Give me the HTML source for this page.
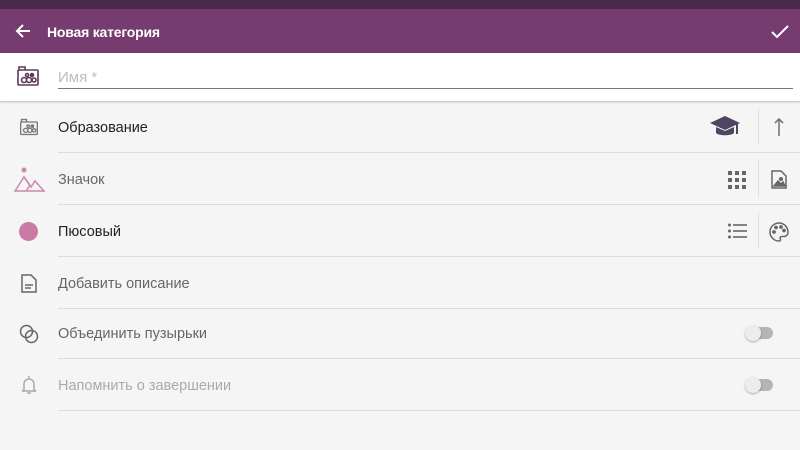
<!DOCTYPE html>
<html><head><meta charset="utf-8"><style>
*{margin:0;padding:0;box-sizing:border-box}
body{width:800px;height:450px;overflow:hidden;background:#f5f5f5;font-family:"Liberation Sans",sans-serif;position:relative}
.sb{position:absolute;left:0;top:0;width:800px;height:9px;background:#4b2a49}
.tb{position:absolute;left:0;top:9px;width:800px;height:44px;background:#763c6f;box-shadow:0 1px 3px rgba(0,0,0,.3)}
.tb .t{position:absolute;left:47px;top:15px;color:#fff;font-size:14px;font-weight:bold;letter-spacing:-0.2px}
.name{position:absolute;left:0;top:53px;width:800px;height:48px;background:#fff;box-shadow:0 1px 2px rgba(0,0,0,.25)}
.name .ph{position:absolute;left:58px;top:16px;font-size:15px;color:#bdbdbd}
.name .ln{position:absolute;left:58px;top:35px;width:735px;height:1px;background:#777}
.row{position:absolute;left:0;width:800px;height:52px}
.row .tx{position:absolute;left:58px;top:19px;font-size:14.5px;color:#666}
.row .dv{position:absolute;left:58px;right:0;bottom:0;height:1px;background:#ddd}
.vs{position:absolute;left:758px;top:8px;width:1px;height:36px;background:#ddd}
.ic{position:absolute}
.tg{position:absolute;left:745px;top:20px;width:28px;height:12px}
.tg .tr{position:absolute;left:8px;top:0;width:20px;height:12px;border-radius:6px;background:#b5b5b5}
.tg .th{position:absolute;left:0;top:-2px;width:16px;height:16px;border-radius:50%;background:#ececec;box-shadow:0 1px 2px rgba(0,0,0,.3)}
</style></head><body>
<div class="sb"></div>
<div class="tb">
<svg class="ic" style="left:14px;top:14px" width="18" height="16" viewBox="0 0 18 16"><path d="M16 8H3M9 2L3 8l6 6" stroke="#fff" stroke-width="2" fill="none"/></svg>
<div class="t">Новая категория</div>
<svg class="ic" style="left:771px;top:16px" width="18" height="14" viewBox="0 0 18 14"><path d="M1 7l5 5L17 1" stroke="#fff" stroke-width="2" fill="none"/></svg>
</div>
<div class="name">
<svg class="ic" style="left:16px;top:11px" width="24" height="24" viewBox="0 0 24 24" fill="none" stroke="#5a3a58" stroke-width="1.6"><rect x="2" y="6" width="20" height="15" rx="1"/><path d="M3 6V3h6v3"/><circle cx="8" cy="16" r="2.5"/><circle cx="13" cy="16" r="2.5"/><circle cx="11" cy="11" r="1.5"/><circle cx="16" cy="11" r="1.5" fill="#5a3a58"/><circle cx="18" cy="16" r="2"/></svg>
<div class="ph">Имя *</div><div class="ln"></div>
</div>
<div class="row" style="top:101px">
<svg class="ic" style="left:19px;top:16px" width="20" height="20" viewBox="0 0 24 24" fill="none" stroke="#777" stroke-width="1.6"><rect x="2" y="6" width="20" height="15" rx="1"/><path d="M3 6V3h6v3"/><circle cx="8" cy="16" r="2.5"/><circle cx="13" cy="16" r="2.5"/><circle cx="11" cy="11" r="1.5"/><circle cx="16" cy="11" r="1.5" fill="#777"/><circle cx="18" cy="16" r="2"/></svg>
<div class="tx" style="color:#222">Образование</div>
<svg class="ic" style="left:709px;top:14px" width="32" height="26" viewBox="0 0 32 26" fill="#4d4563"><path d="M16 1L1 8l15 7 15-7z"/><path d="M7 12v6c3 3 15 3 18 0v-6l-9 4z"/><rect x="27" y="9" width="2" height="10"/></svg>
<div class="vs"></div>
<svg class="ic" style="left:772px;top:16px" width="14" height="20" viewBox="0 0 14 20"><path d="M7 19V2M3 6l4-4 4 4" stroke="#777" stroke-width="1.6" fill="none"/></svg>
<div class="dv"></div></div>
<div class="row" style="top:153px">
<svg class="ic" style="left:14px;top:11px" width="32" height="30" viewBox="0 0 32 30" fill="none" stroke="#c98aad" stroke-width="1.5"><circle cx="10" cy="6" r="2.5" fill="#c98aad" stroke="none"/><path d="M1 27L10 13l7 10 4-6 9 10z"/><path d="M10 13l6 8-4 6"/></svg>
<div class="tx">Значок</div>
<svg class="ic" style="left:728px;top:18px" width="18" height="18" viewBox="0 0 18 18" fill="#666"><rect x="0" y="0" width="4" height="4"/><rect x="7" y="0" width="4" height="4"/><rect x="14" y="0" width="4" height="4"/><rect x="0" y="7" width="4" height="4"/><rect x="7" y="7" width="4" height="4"/><rect x="14" y="7" width="4" height="4"/><rect x="0" y="14" width="4" height="4"/><rect x="7" y="14" width="4" height="4"/><rect x="14" y="14" width="4" height="4"/></svg>
<div class="vs"></div>
<svg class="ic" style="left:771px;top:17px" width="16" height="19" viewBox="0 0 16 19" fill="none" stroke="#666" stroke-width="1.5"><path d="M1 1h9l5 5v12H1z"/><path d="M3 16l4-5 3 3 2-2 2 4z" fill="#666"/><circle cx="10" cy="9" r="1.3" fill="#666"/></svg>
<div class="dv"></div></div>
<div class="row" style="top:205px">
<div class="ic" style="left:19px;top:17px;width:19px;height:19px;border-radius:50%;background:#c97ba3"></div>
<div class="tx" style="color:#222">Пюсовый</div>
<svg class="ic" style="left:728px;top:18px" width="19" height="16" viewBox="0 0 19 16" fill="#666"><circle cx="1.5" cy="2" r="1.5"/><circle cx="1.5" cy="8" r="1.5"/><circle cx="1.5" cy="14" r="1.5"/><rect x="5" y="1.2" width="14" height="1.6"/><rect x="5" y="7.2" width="14" height="1.6"/><rect x="5" y="13.2" width="14" height="1.6"/></svg>
<div class="vs"></div>
<svg class="ic" style="left:769px;top:17px" width="20" height="20" viewBox="0 0 20 20" fill="none" stroke="#666" stroke-width="1.5"><path d="M10 1a9 9 0 1 0 0 18c1.5 0 2-1 1.3-2.2-.7-1.2 0-2.3 1.4-2.3H15a4 4 0 0 0 4-4C19 5 15 1 10 1z"/><circle cx="5" cy="10" r="1.1" fill="#666"/><circle cx="7" cy="5.5" r="1.1" fill="#666"/><circle cx="12" cy="5" r="1.1" fill="#666"/><circle cx="15" cy="8.5" r="1.1" fill="#666"/></svg>
<div class="dv"></div></div>
<div class="row" style="top:257px">
<svg class="ic" style="left:21px;top:17px" width="16" height="19" viewBox="0 0 16 19" fill="none" stroke="#666" stroke-width="1.5"><path d="M1 1h9l5 5v12H1z"/><path d="M4 11h8M4 14h6"/></svg>
<div class="tx">Добавить описание</div>
<div class="dv"></div></div>
<div class="row" style="top:307px">
<svg class="ic" style="left:19px;top:17px" width="20" height="20" viewBox="0 0 20 20" fill="none" stroke="#666" stroke-width="1.5"><circle cx="7.5" cy="7.5" r="6"/><circle cx="12.5" cy="12.5" r="6"/></svg>
<div class="tx">Объединить пузырьки</div>
<div class="tg"><div class="tr"></div><div class="th"></div></div>
<div class="dv"></div></div>
<div class="row" style="top:359px">
<svg class="ic" style="left:21px;top:16px" width="16" height="20" viewBox="0 0 16 20" fill="none" stroke="#aaa" stroke-width="1.5"><path d="M8 1v2M3 15V9a5 5 0 0 1 10 0v6l2 1H1z"/><path d="M6 18h4"/></svg>
<div class="tx" style="color:#aaa">Напомнить о завершении</div>
<div class="tg"><div class="tr"></div><div class="th"></div></div>
<div class="dv"></div></div>
</body></html>
